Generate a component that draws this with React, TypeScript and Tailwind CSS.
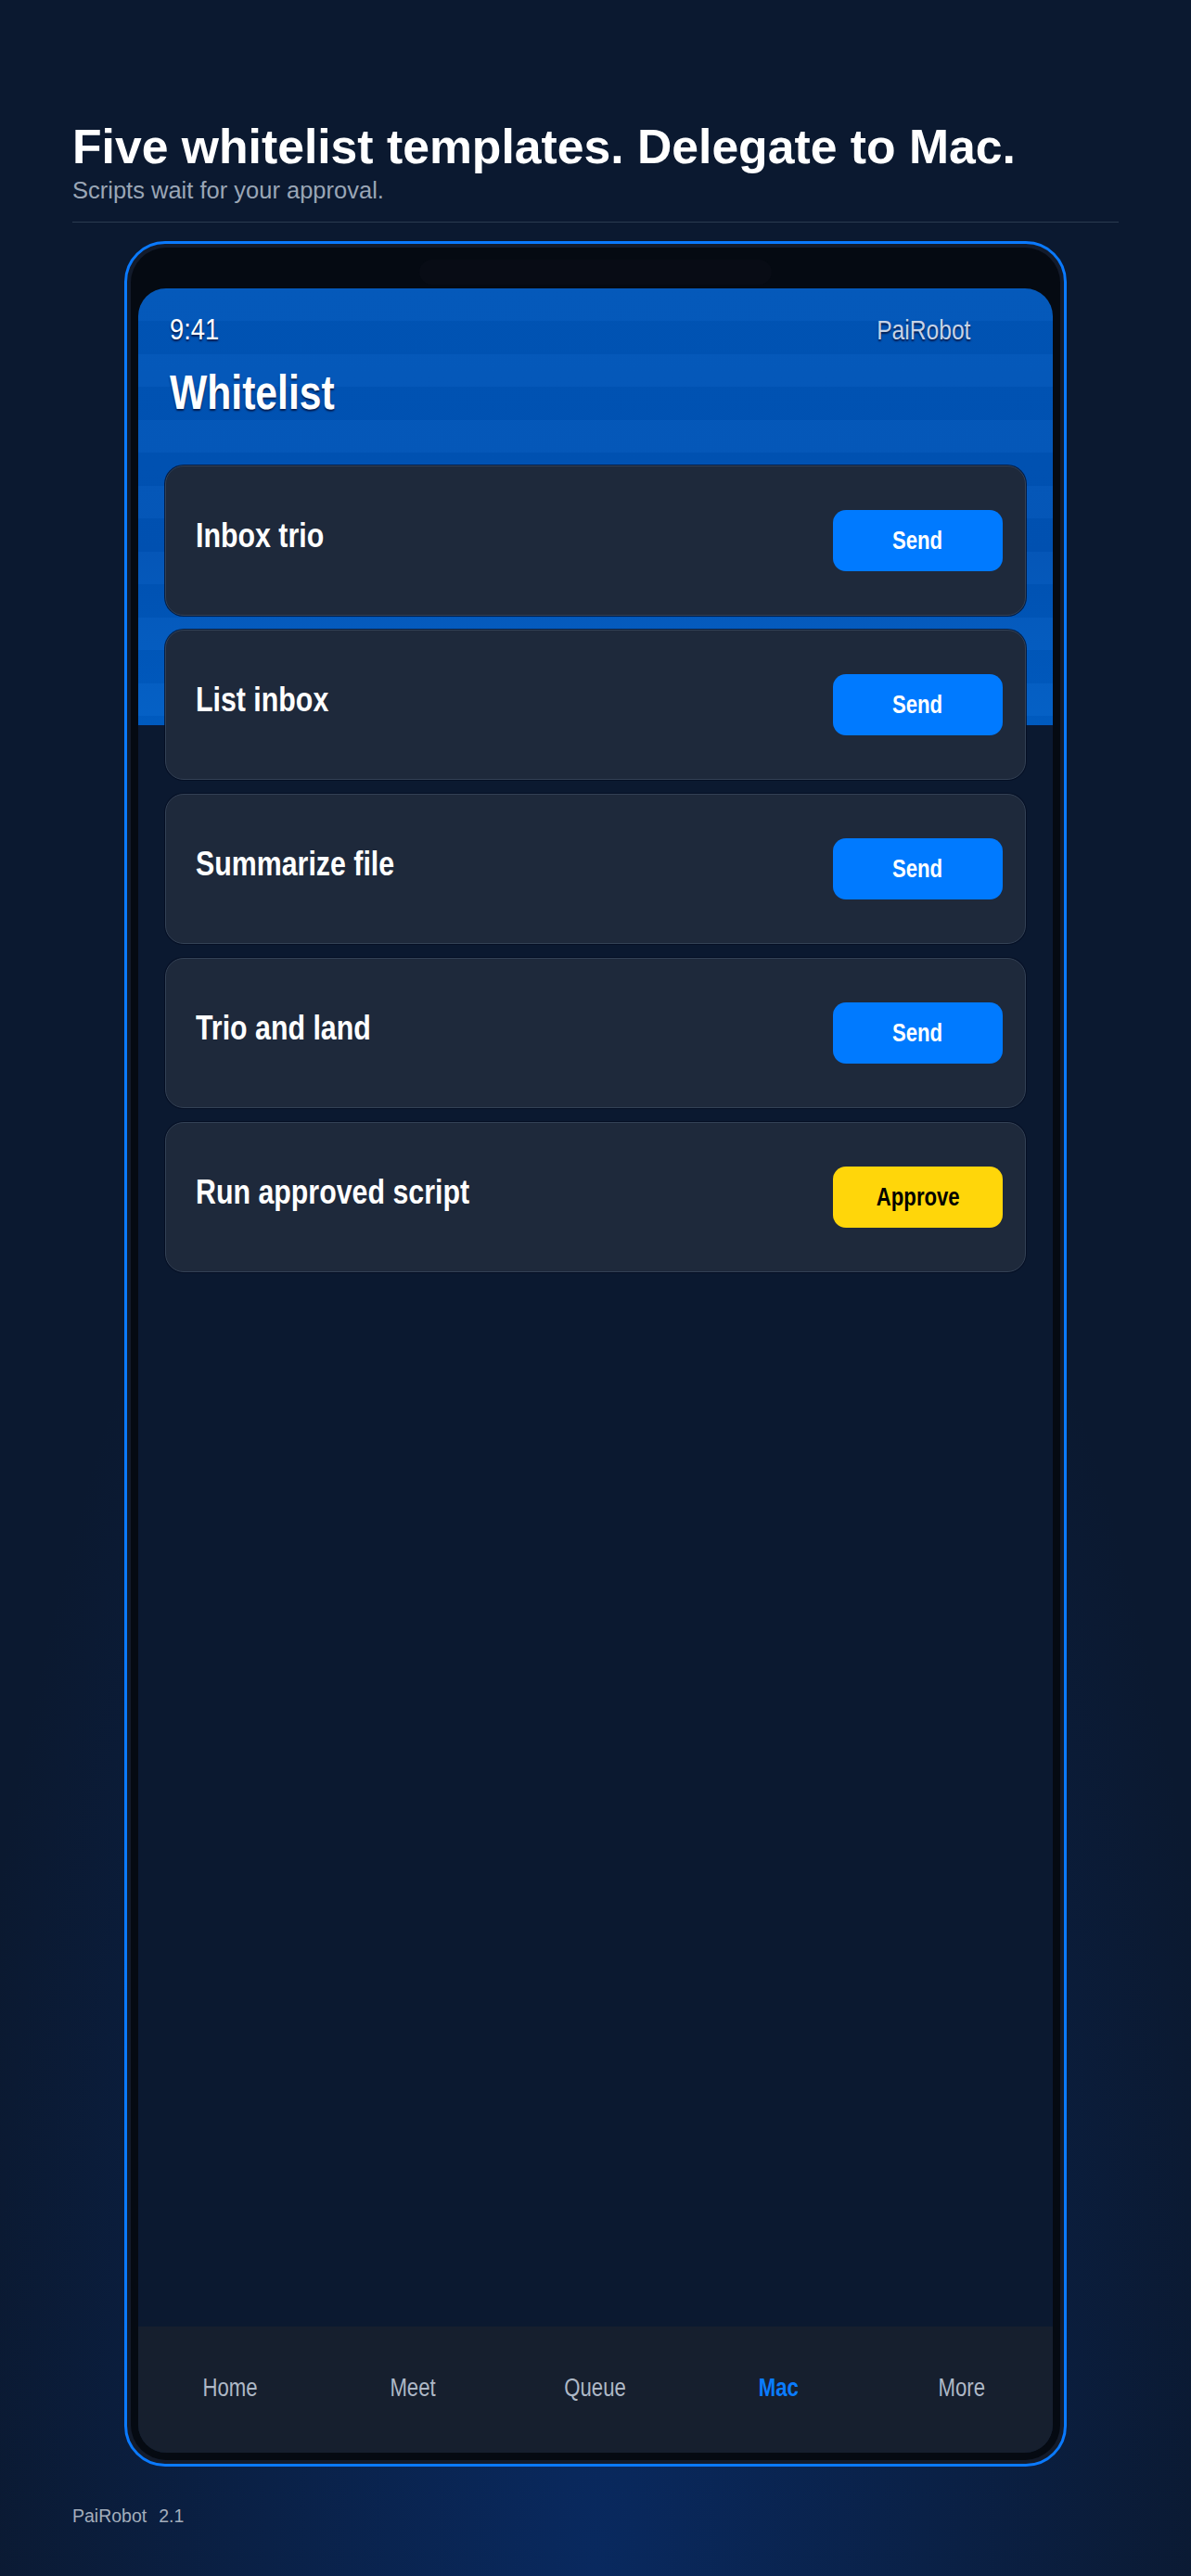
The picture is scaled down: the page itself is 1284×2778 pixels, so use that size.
const templates = [
  { title: "Inbox trio", action: "Send" },
  { title: "List inbox", action: "Send" },
  { title: "Summarize file", action: "Send" },
  { title: "Trio and land", action: "Send" },
  { title: "Run approved script", action: "Approve" },
];

const tabs = ["Home", "Meet", "Queue", "Mac", "More"];

// the app screen uses a narrow sans; Arial Narrow is not installed,
// so Liberation Sans is squeezed to the same width
function TemplateCard({ title, action }: { title: string; action: string }) {
  const approve = action === "Approve";

  return (
    <div className="h-[162px] flex items-center justify-between rounded-[20px] border border-[#334155] bg-[#1e293b] pl-[32px] pr-[24px] shadow-[0_0_0_1px_rgba(4,12,32,0.75)]">
      <h2 className="mb-[11px] origin-left scale-x-[0.82] text-[37px] leading-[44px] font-bold text-white whitespace-nowrap">
        {title}
      </h2>

      <button
        className={
          approve
            ? "w-[183px] h-[66px] rounded-[14px] bg-[#ffd60a] text-[27px] font-bold text-black"
            : "w-[183px] h-[66px] rounded-[14px] bg-[#007aff] text-[27px] font-bold text-white"
        }
      >
        <span className="inline-block scale-x-[0.82]">{action}</span>
      </button>
    </div>
  );
}

export default function App() {
  return (
    <div className="min-h-[2778px] bg-[#0b1930] [background-image:radial-gradient(ellipse_700px_1900px_at_50%_100%,rgba(8,48,115,0.7),transparent_100%)] px-[78px] pt-[128px] pb-[53px] font-['Liberation_Sans',Arial,sans-serif]">

      {/* Heading */}

      <h1 className="text-[51.7px] leading-[60px] font-bold text-white">
        Five whitelist templates. Delegate to Mac.
      </h1>

      <p className="mt-[2px] text-[25.5px] leading-[30px] text-[#9aa6b6]">
        Scripts wait for your approval.
      </p>

      <div className="mt-[19px] h-px bg-[#2b3a50]" />

      {/* Phone */}

      <div className="mx-auto mt-[20px] w-[1016px] rounded-[44px] border-[3px] border-[#0a7aff] bg-[#131b2b] p-[4px]">
        <div className="rounded-[38px] bg-[#050a12] px-[8px] pt-[13px] pb-[8px]">

          <div className="mx-auto mb-[4px] h-[27px] w-[380px] rounded-full bg-[#080c15]" />

          <div className="h-[2334px] flex flex-col overflow-hidden rounded-[30px] bg-[#0b1930] bg-no-repeat [background-size:100%_472px] [background-image:linear-gradient(0deg,#0a1a3a_0px,#0a1a3a_1px,transparent_1px),repeating-linear-gradient(180deg,rgba(255,255,255,0.02)_0px,rgba(255,255,255,0.02)_35.5px,rgba(0,0,30,0.04)_35.5px,rgba(0,0,30,0.04)_71px),linear-gradient(180deg,#0056b9,#0053b6_60%,#005ec5)]">

            {/* Status bar */}

            <div className="flex justify-between pt-[27px] pl-[34px] pr-[89px] text-[30px] leading-[36px] [text-shadow:0_2px_2px_rgba(0,12,50,0.8)]">
              <span className="inline-block origin-left scale-x-[0.88] text-[31px] text-white">9:41</span>
              <span className="inline-block origin-right scale-x-[0.82] text-[#c7d3e6]">PaiRobot</span>
            </div>

            <h1 className="mt-[19px] pl-[34px] text-[52px] leading-[60px] font-bold text-white [text-shadow:0_2px_2px_rgba(0,12,50,0.8)]">
              <span className="inline-block origin-left scale-x-[0.82]">Whitelist</span>
            </h1>

            {/* Templates */}

            <div className="mt-[49px] flex flex-col gap-[15px] px-[29px]">
              {templates.map((item) => (
                <TemplateCard
                  key={item.title}
                  title={item.title}
                  action={item.action}
                />
              ))}
            </div>

            {/* Tab bar */}

            <div className="mt-auto h-[136px] grid grid-cols-5 items-center bg-[#161f2e] pb-[4px]">
              {tabs.map((tab) => (
                <span
                  key={tab}
                  className={
                    tab === "Mac"
                      ? "text-center text-[27px] font-bold text-[#0a7cff]"
                      : "text-center text-[27px] text-[#aeb8c6]"
                  }
                >
                  <span className="inline-block scale-x-[0.82]">{tab}</span>
                </span>
              ))}
            </div>

          </div>
        </div>
      </div>

      {/* Footer */}

      <div className="mt-[41px] flex gap-[13px] text-[19.5px] leading-[24px] text-[#a3adbb]">
        <span>PaiRobot</span>
        <span>2.1</span>
      </div>

    </div>
  );
}
